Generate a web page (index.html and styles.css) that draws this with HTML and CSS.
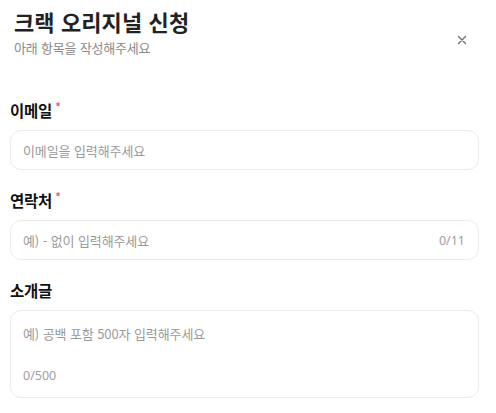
FILE: index.html
```html
<!DOCTYPE html>
<html lang="ko">
<head>
<meta charset="utf-8">
<title>크랙 오리지널 신청</title>
<link rel="stylesheet" href="styles.css">
</head>
<body>
<div class="modal">
  <header class="header">
    <div class="titles">
      <h1 class="title">크랙 오리지널 신청</h1>
      <p class="subtitle">아래 항목을 작성해주세요</p>
    </div>
    <button class="close" type="button" aria-label="닫기">
      <svg width="10" height="10" viewBox="0 0 10 10"><path d="M1.5 1.5L8.5 8.5M8.5 1.5L1.5 8.5" stroke="#6f6f6f" stroke-width="1.4" stroke-linecap="round"/></svg>
    </button>
  </header>
  <form class="form">
    <div class="field">
      <label class="label">이메일<span class="req">*</span></label>
      <div class="box"><input class="input" type="text" placeholder="이메일을 입력해주세요"></div>
    </div>
    <div class="field">
      <label class="label">연락처<span class="req">*</span></label>
      <div class="box"><input class="input" type="text" placeholder="예) - 없이 입력해주세요"><span class="count">0/11</span></div>
    </div>
    <div class="field">
      <label class="label">소개글</label>
      <div class="box area"><textarea class="textarea" placeholder="예) 공백 포함 500자 입력해주세요"></textarea><span class="count left">0/500</span></div>
    </div>
  </form>
</div>
</body>
</html>
```

FILE: styles.css
```css
* { box-sizing: border-box; }
body {
  margin: 0;
  background: #fff;
  font-family: "Noto Sans CJK KR", "Noto Sans", sans-serif;
  color: #222;
}
.modal {
  width: 496px;
  padding: 0 17px 0 10px;
}
.header {
  display: flex;
  justify-content: space-between;
  align-items: flex-start;
  padding: 6px 0 0 4px;
}
.title {
  margin: 0;
  font-size: 22px;
  line-height: 31px;
  font-weight: 700;
  color: #222;
  letter-spacing: 0.1px;
}
.subtitle {
  margin: 2px 0 0;
  font-size: 13px;
  line-height: 18px;
  color: #8a8a8a;
  letter-spacing: -0.2px;
}
.close {
  border: 0;
  background: none;
  padding: 0;
  width: 10px;
  height: 10px;
  margin: 29px 12px 0 0;
  display: flex;
}
.form {
  margin-top: 43px;
  display: flex;
  flex-direction: column;
  gap: 20px;
}
.field {
  display: flex;
  flex-direction: column;
  gap: 10px;
}
.label {
  font-size: 15.5px;
  line-height: 20px;
  font-weight: 600;
  color: #111;
  letter-spacing: -0.2px;
}
.req {
  color: #f25a5a;
  font-size: 11px;
  vertical-align: top;
  line-height: 12px;
  margin-left: 3px;
}
.box {
  height: 40px;
  border: 1px solid #ebebeb;
  border-radius: 11px;
  display: flex;
  align-items: center;
  padding: 0 13px 0 12px;
}
.input, .textarea {
  flex: 1;
  border: 0;
  outline: 0;
  padding: 0;
  font-family: inherit;
  font-size: 13px;
  color: #222;
  background: transparent;
  letter-spacing: -0.1px;
}
.input::placeholder, .textarea::placeholder { color: #9a9a9a; }
.count {
  font-size: 12.5px;
  color: #a0a0a0;
  font-family: "Noto Sans", sans-serif;
}
.area {
  height: 88px;
  flex-direction: column;
  align-items: stretch;
  padding: 13px 12px 13px 12px;
}
.textarea {
  resize: none;
  height: 20px;
  line-height: 20px;
  flex: 1;
}
.count.left { line-height: 16px; }
```
